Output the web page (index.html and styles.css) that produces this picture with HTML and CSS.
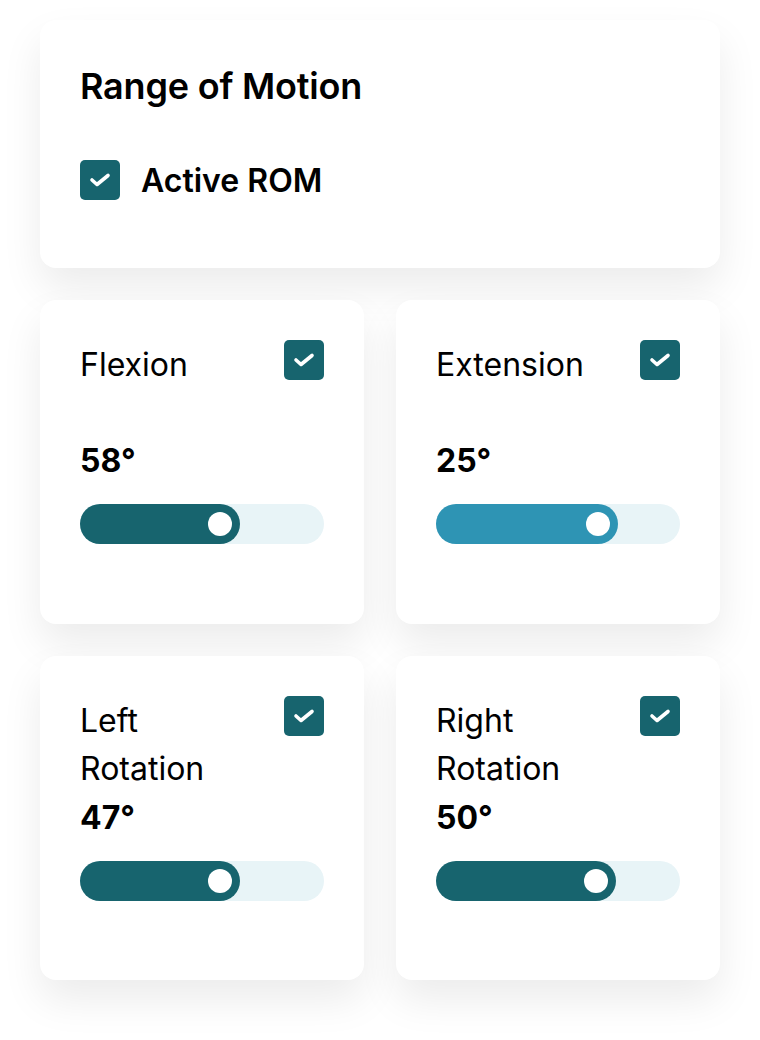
FILE: index.html
```html
<!DOCTYPE html>
<html lang="en">
<head>
<meta charset="utf-8">
<title>Range of Motion</title>
<link rel="stylesheet" href="styles.css">
</head>
<body>
<main class="page">
  <section class="card main-card">
    <h1 class="title">Range of Motion</h1>
    <label class="check-row">
      <span class="checkbox"><svg viewBox="0 0 40 40"><polyline points="12,20 17,24.5 28,15.5"/></svg></span>
      <span class="check-label">Active ROM</span>
    </label>
  </section>
  <div class="grid">
    <section class="card metric">
      <div class="metric-head">
        <span class="metric-title">Flexion</span>
        <span class="checkbox"><svg viewBox="0 0 40 40"><polyline points="12,20 17,24.5 28,15.5"/></svg></span>
      </div>
      <div class="metric-value">58°</div>
      <div class="track"><div class="fill" style="width:160px"><span class="thumb"></span></div></div>
    </section>
    <section class="card metric">
      <div class="metric-head">
        <span class="metric-title">Extension</span>
        <span class="checkbox"><svg viewBox="0 0 40 40"><polyline points="12,20 17,24.5 28,15.5"/></svg></span>
      </div>
      <div class="metric-value">25°</div>
      <div class="track"><div class="fill fill-light" style="width:182px"><span class="thumb"></span></div></div>
    </section>
    <section class="card metric">
      <div class="metric-head">
        <span class="metric-title">Left Rotation</span>
        <span class="checkbox"><svg viewBox="0 0 40 40"><polyline points="12,20 17,24.5 28,15.5"/></svg></span>
      </div>
      <div class="metric-value">47°</div>
      <div class="track"><div class="fill" style="width:160px"><span class="thumb"></span></div></div>
    </section>
    <section class="card metric">
      <div class="metric-head">
        <span class="metric-title">Right Rotation</span>
        <span class="checkbox"><svg viewBox="0 0 40 40"><polyline points="12,20 17,24.5 28,15.5"/></svg></span>
      </div>
      <div class="metric-value">50°</div>
      <div class="track"><div class="fill" style="width:180px"><span class="thumb"></span></div></div>
    </section>
  </div>
</main>
</body>
</html>
```
FILE: styles.css
```css
* { box-sizing: border-box; }
html, body { margin: 0; padding: 0; background: #ffffff; }
body {
  font-family: Inter, "Noto Sans", sans-serif;
  color: #000000;
}
.page {
  padding: 20px 40px 60px;
  display: flex;
  flex-direction: column;
  gap: 32px;
}
.card {
  background: #ffffff;
  border-radius: 16px;
  box-shadow: 0 20px 40px rgba(0, 0, 0, 0.08);
  padding: 40px;
}
.main-card {
  height: 248px;
}
.title {
  margin: 0;
  font-size: 36px;
  font-weight: 600;
  line-height: 48px;
  letter-spacing: -0.2px;
  margin-top: 2px;
}
.check-row {
  margin-top: 50px;
  display: flex;
  align-items: flex-start;
  gap: 21px;
}
.check-label {
  font-size: 32px;
  font-weight: 600;
  line-height: 40px;
  padding-top: 1px;
}
.checkbox {
  width: 40px;
  height: 40px;
  border-radius: 5px;
  background: #17646e;
  display: flex;
  flex: none;
}
.checkbox svg {
  width: 40px;
  height: 40px;
}
.checkbox polyline {
  fill: none;
  stroke: #ffffff;
  stroke-width: 3.6;
  stroke-linecap: round;
  stroke-linejoin: round;
}
.grid {
  display: grid;
  grid-template-columns: 1fr 1fr;
  gap: 32px;
}
.metric {
  height: 324px;
  display: flex;
  flex-direction: column;
}
.metric-head {
  display: flex;
  justify-content: space-between;
  align-items: flex-start;
  gap: 24px;
  min-height: 96px;
}
.metric-title {
  font-size: 32px;
  font-weight: 400;
  line-height: 48px;
  margin-top: 1px;
}
.metric-value {
  font-size: 32px;
  font-weight: 700;
  line-height: 48px;
  margin-top: 1px;
}
.track {
  margin-top: 19px;
  height: 40px;
  border-radius: 20px;
  background: #e8f4f7;
  position: relative;
}
.fill {
  height: 40px;
  border-radius: 20px;
  background: #17646e;
  position: relative;
}
.fill-light {
  background: #2e94b4;
}
.thumb {
  position: absolute;
  right: 8px;
  top: 8px;
  width: 24px;
  height: 24px;
  border-radius: 50%;
  background: #ffffff;
}
```
